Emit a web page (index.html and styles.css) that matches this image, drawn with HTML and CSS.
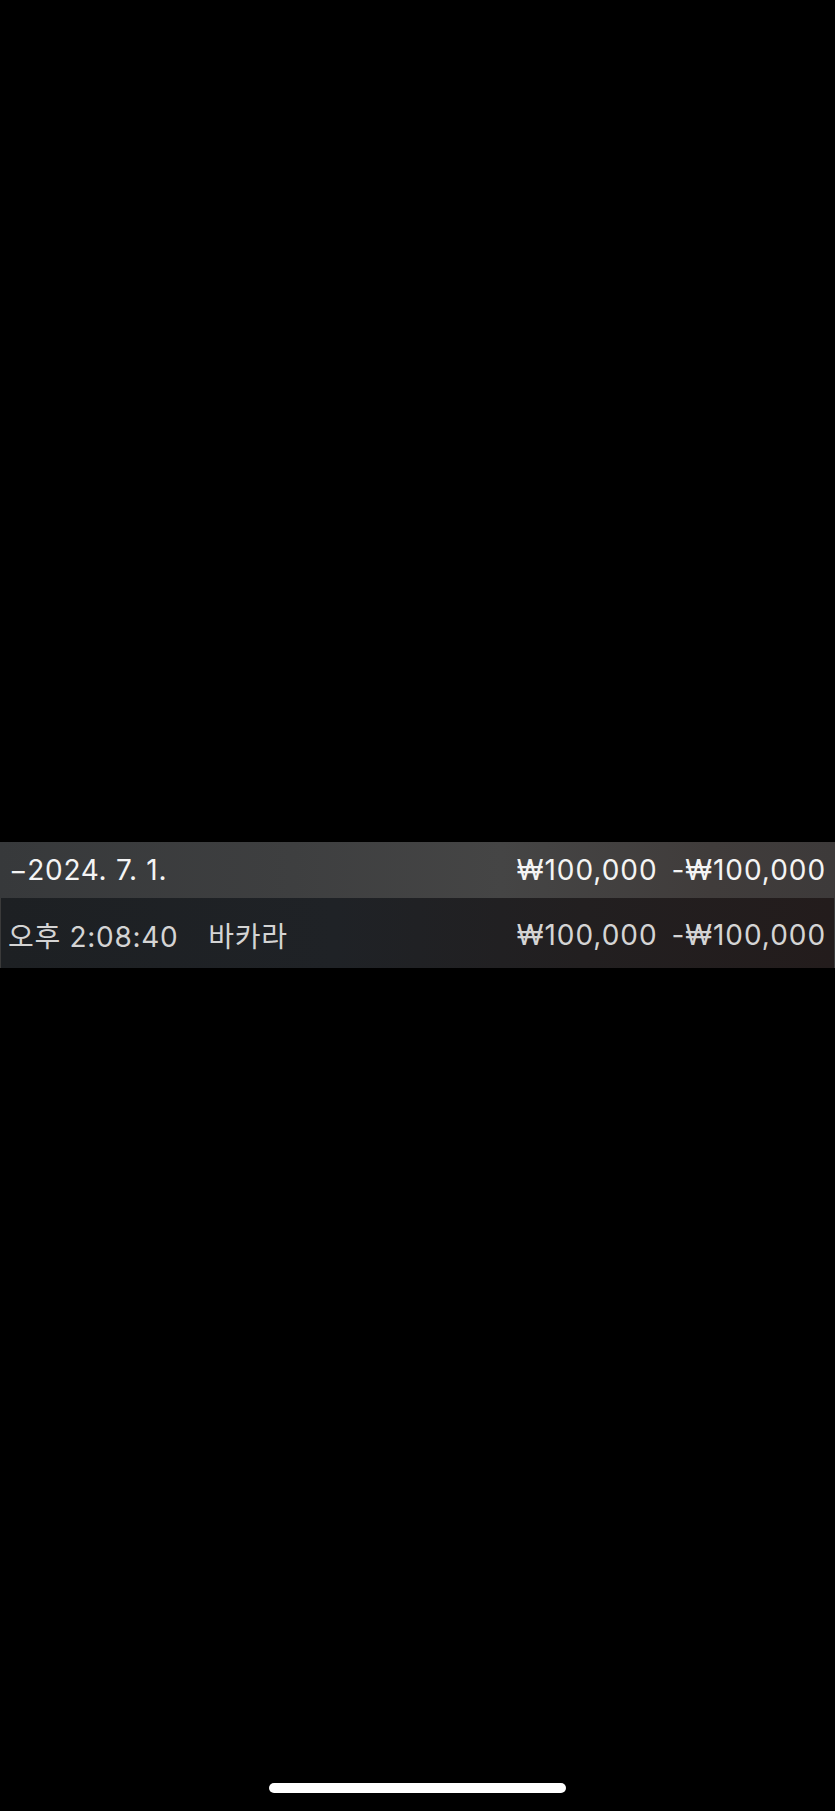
FILE: index.html
```html
<!DOCTYPE html>
<html lang="ko">
<head>
<meta charset="utf-8">
<link rel="stylesheet" href="styles.css">
</head>
<body>
<div class="screen">
  <div class="table">
    <div class="row group">
      <span class="label">−2024. 7. 1.</span>
      <span class="amounts"><span>₩100,000</span><span>-₩100,000</span></span>
    </div>
    <div class="row item">
      <span class="label"><span>오후 2:08:40</span><span class="game">바카라</span></span>
      <span class="amounts"><span>₩100,000</span><span>-₩100,000</span></span>
    </div>
  </div>
  <div class="home"></div>
</div>
</body>
</html>
```
FILE: styles.css
```css
html, body {
  margin: 0;
  padding: 0;
  background: #000;
}
.screen {
  width: 835px;
  height: 1811px;
  display: flex;
  flex-direction: column;
  font-family: Inter, "Noto Sans CJK KR", sans-serif;
  position: relative;
}
.table {
  margin-top: 842px;
  display: flex;
  flex-direction: column;
}
.row {
  display: flex;
  justify-content: space-between;
  align-items: center;
  padding: 0 9px 0 9px;
  font-size: 28px;
  letter-spacing: 0.7px;
}
.group {
  height: 56px;
  color: #f4f4f4;
  background: linear-gradient(90deg, #37393b 0%, #3e3f40 35%, #454545 60%, #403c3b 85%, #3d3a3a 100%);
}
.item {
  height: 70px;
  color: #d4d4d4;
  background: linear-gradient(90deg, #1d2023 0%, #1f2226 40%, #221f20 70%, #231c1c 100%);
  border-left: 1px solid #3a3a3a;
  border-right: 1px solid #3a3a3a;
  padding-left: 7px;
  padding-right: 8px;
}
.item .label,
.item .amounts {
  padding-top: 4px;
}
.label {
  display: flex;
  gap: 30px;
}
.amounts {
  display: flex;
  gap: 14px;
  letter-spacing: 0.95px;
}
.home {
  position: absolute;
  left: 269px;
  top: 1783px;
  width: 297px;
  height: 10px;
  border-radius: 5px;
  background: #fff;
}
```
